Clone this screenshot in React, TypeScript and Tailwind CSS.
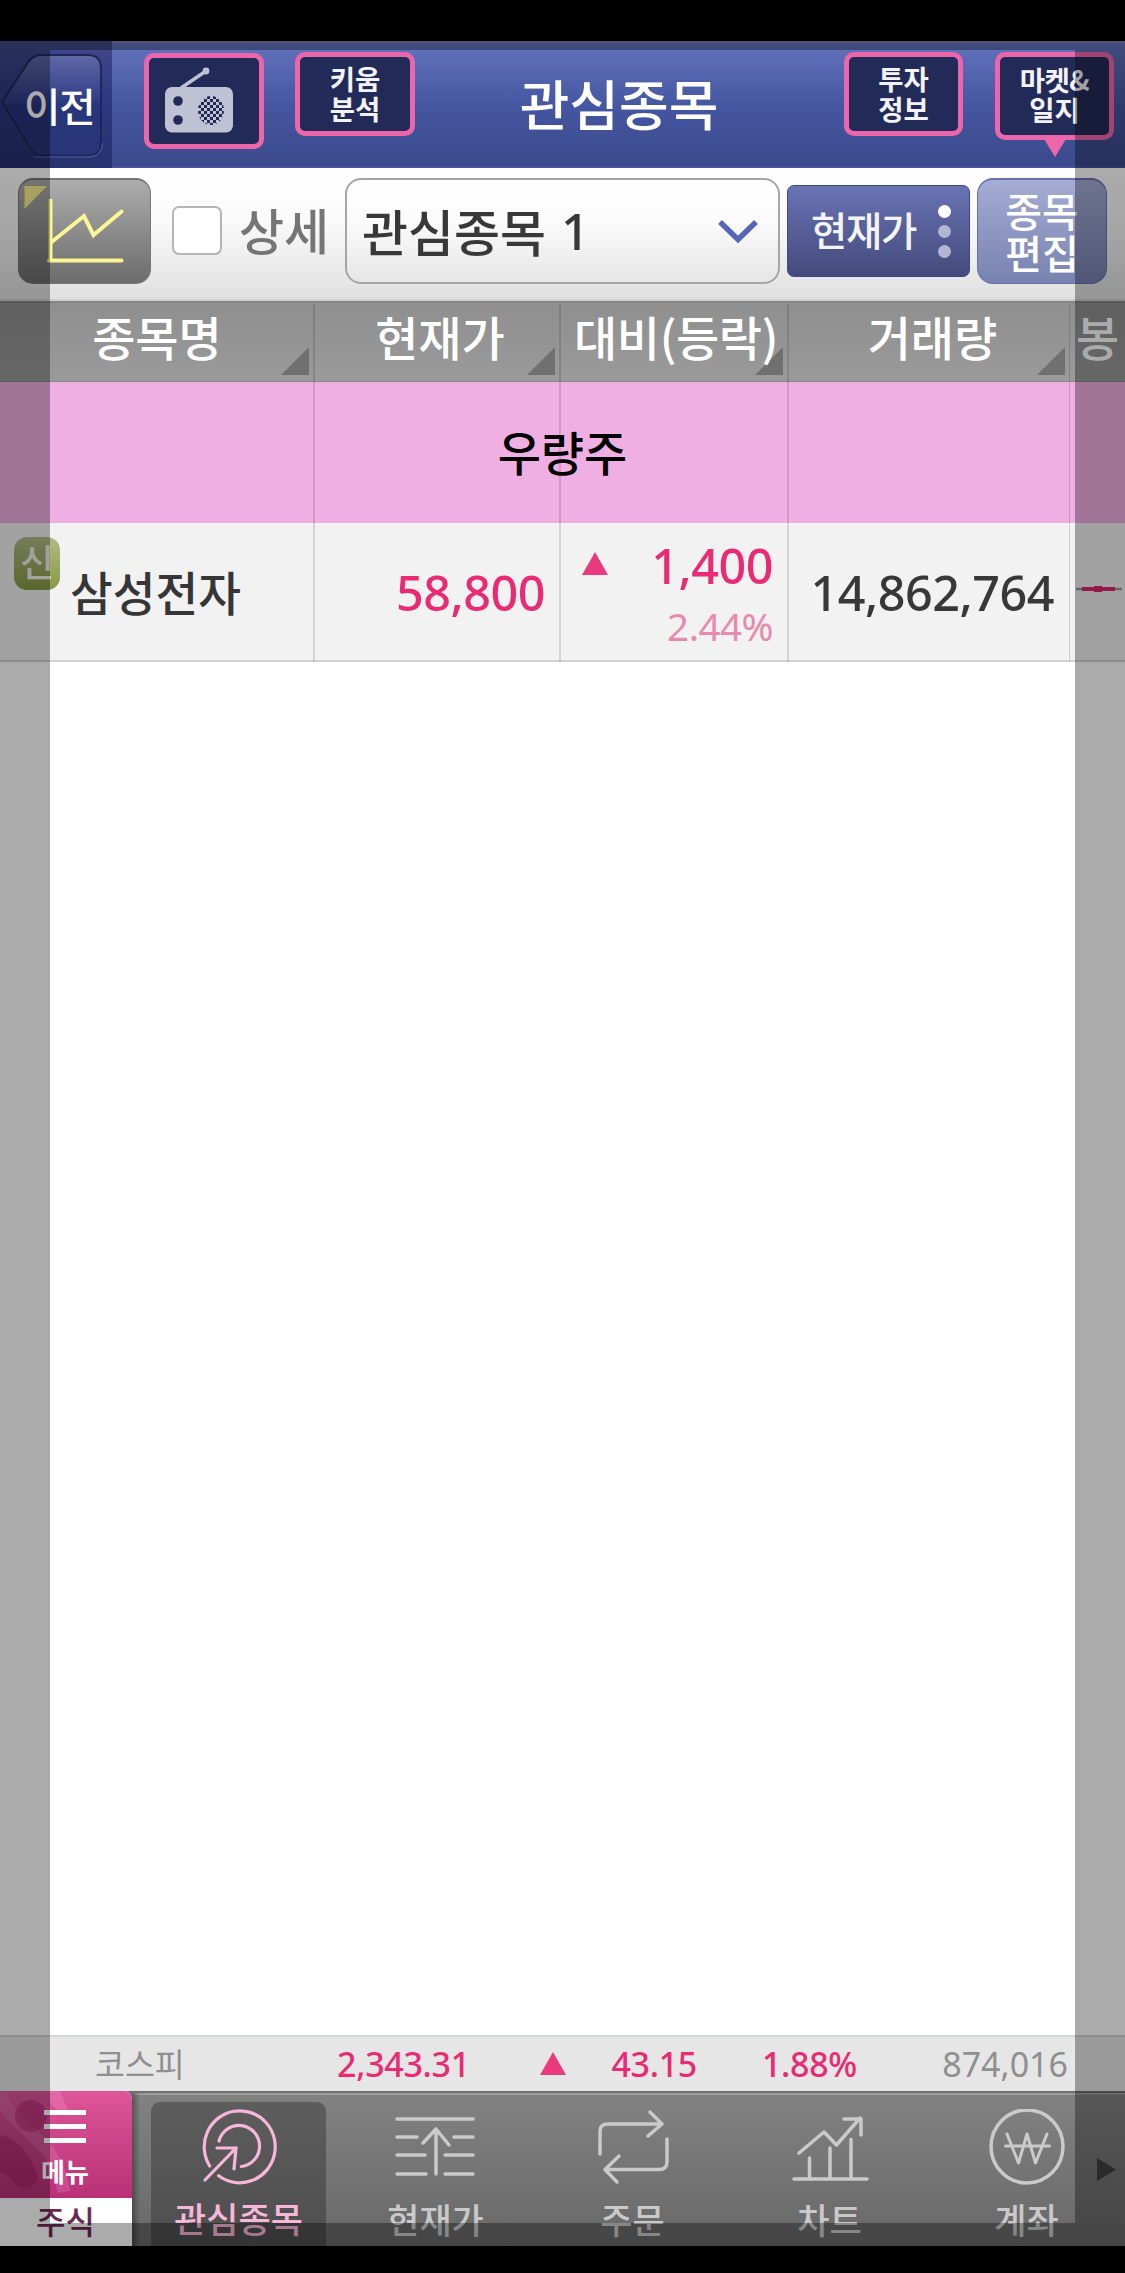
import type { ReactNode } from "react";

const columns = [
  { label: "종목명", cls: "w-[314px]" },
  { label: "현재가", cls: "w-[246px] pl-[6px]" },
  { label: "대비(등락)", cls: "w-[228px] pl-[4px] tracking-[-0.4px]" },
  { label: "거래량", cls: "w-[282px] pl-[7px]" },
];

function PinkButton({ children, className }: { children: ReactNode; className: string }) {
  return (
    <button
      className={
        "relative flex shrink-0 flex-col items-center rounded-[10px] border-[5px] border-[#ed66ac] bg-[#222b57] text-[27.5px] font-bold leading-[30px] text-[#f2f2f8] " +
        className
      }
    >
      {children}
    </button>
  );
}

function RadioIcon() {
  return (
    <svg width="110" height="86" viewBox="149 58 110 86" fill="none">
      <defs>
        <pattern id="grille" width="6" height="6" patternUnits="userSpaceOnUse">
          <rect width="6" height="6" fill="#222b57" />
          <rect width="3" height="3" fill="#bfc2d4" />
          <rect x="3" y="3" width="3" height="3" fill="#bfc2d4" />
        </pattern>
      </defs>
      <path d="M181 88 L206 71" stroke="#bfc2d4" strokeWidth="3.5" />
      <circle cx="206" cy="71" r="3.4" fill="#bfc2d4" />
      <rect x="165" y="87" width="68" height="45.500" rx="7" fill="#bfc2d4" />
      <circle cx="178" cy="101" r="4.800" fill="#222b57" />
      <circle cx="178" cy="120" r="4.800" fill="#222b57" />
      <ellipse cx="211" cy="110.500" rx="13" ry="14.500" fill="url(#grille)" />
    </svg>
  );
}

function Header() {
  return (
    <header className="flex h-[127px] shrink-0 items-start border-t-2 border-b-2 border-t-[#7a7ea8] border-b-[#4453a0] bg-linear-to-b from-[#6272bc] via-[#44559f] via-55% to-[#3a4a8b] text-white">
      <button className="relative -mt-[2px] h-[127px] w-[112px] shrink-0 bg-linear-to-b from-[#40498a] via-[#2b387e] via-50% to-[#27336f]">
        <svg className="absolute inset-0" width="112" height="127" viewBox="0 41 112 127" fill="none">
          <defs>
            <linearGradient id="back" x1="0" y1="55" x2="0" y2="156" gradientUnits="userSpaceOnUse">
              <stop offset="0" stopColor="#5f6aa6" />
              <stop offset="0.45" stopColor="#2f3d86" />
              <stop offset="0.5" stopColor="#27357c" />
              <stop offset="1" stopColor="#293678" />
            </linearGradient>
          </defs>
          <path
            d="M2 102 L29 61 Q34 55 41 55 H88 Q101 55 101 69 V142 Q101 155.500 88 155.500 H41 Q35 155.500 31 149 Z"
            fill="url(#back)"
            stroke="#1e2858"
            strokeWidth="2"
          />
          <path d="M34 157 H90 Q102 156 102.500 143" stroke="#56609a" strokeWidth="1" />
        </svg>
        <span className="absolute top-[44px] left-[24px] text-[39.500px] leading-[40px] font-medium tracking-[-1px] whitespace-nowrap">이전</span>
      </button>
      <PinkButton className="mt-[10px] ml-[32px] h-[96px] w-[120px]">
        <RadioIcon />
      </PinkButton>
      <PinkButton className="mt-[9px] ml-[31px] h-[84px] w-[120px] pt-[6px]">
        <span>키움</span>
        <span>분석</span>
      </PinkButton>
      <h1 className="mt-[33px] ml-[104px] w-[200px] text-center text-[54px] leading-[54px] font-medium whitespace-nowrap">관심종목</h1>
      <PinkButton className="mt-[9px] ml-[125px] h-[84px] w-[119px] pt-[6px]">
        <span>투자</span>
        <span>정보</span>
      </PinkButton>
      <PinkButton className="mt-[9px] ml-[32px] h-[88px] w-[119px] pt-[7px]">
        <span className="tracking-[-0.5px]">마켓&amp;</span>
        <span>일지</span>
        <svg className="absolute top-[82px] left-[44px]" width="22" height="18" viewBox="0 0 22 18">
          <path d="M0 0H22L11 18Z" fill="#ed66ac" />
        </svg>
      </PinkButton>
    </header>
  );
}

function Toolbar() {
  return (
    <section className="flex h-[133px] shrink-0 items-start border-b-2 border-[#cfcfcf] bg-linear-to-b from-white via-[#fafafa] via-40% to-[#e0e0e0] pt-[10px] pl-[18px]">
      <button className="h-[106px] w-[133px] shrink-0 overflow-hidden rounded-[15px] border border-t-2 border-[#777] bg-linear-to-b from-[#adadad] to-[#6c6c6c]">
        <svg width="131" height="103" viewBox="19 180 131 103" fill="none">
          <path d="M24.500 186H47L24.500 209Z" fill="#f8f08c" />
          <path d="M50.500 199V261.500" stroke="#fbf593" strokeWidth="4" />
          <path d="M49 260.500H121.500" stroke="#fbf593" strokeWidth="4" strokeLinecap="round" />
          <path d="M51 242.500L84 216L93.500 235L121.500 211.500" stroke="#fbf593" strokeWidth="4" strokeLinecap="round" />
        </svg>
      </button>
      <span className="mt-[28px] ml-[21px] h-[49px] w-[50px] shrink-0 rounded-[7px] border-2 border-[#b5b5b5] bg-white" />
      <span className="mt-[27px] ml-[17px] w-[90px] shrink-0 text-center text-[49px] leading-[48px] font-medium whitespace-nowrap text-[#757575]">상세</span>
      <button className="ml-[16px] flex h-[106px] w-[435px] shrink-0 items-start justify-between rounded-[16px] border-2 border-[#a6a6a6] bg-linear-to-b from-white via-[#fbfbfb] via-40% to-[#e6e6e6] pt-[25px] pr-[17px] pl-[15px]">
        <span className="flex text-[50px] leading-[50px] font-medium whitespace-nowrap text-[#383838]">
          관심종목<span className="mt-[1px] ml-[15px] font-['Noto_Sans',sans-serif]">1</span>
        </span>
        <svg className="mt-[12px]" width="46" height="30" viewBox="715 217 46 30" fill="none">
          <path d="M720 222L738 239.500L756 222" stroke="#5566b6" strokeWidth="5.500" />
        </svg>
      </button>
      <button className="mt-[7px] ml-[7px] flex h-[92px] w-[183px] shrink-0 items-start justify-between rounded-[7px] border border-[#3c478c] bg-linear-to-b from-[#6a74b4] to-[#444a7c] pr-[18px] pl-[23px]">
        <span className="mt-[23px] text-[39.500px] leading-[40px] font-medium tracking-[-1.300px] whitespace-nowrap text-[#f3f3fa]">현재가</span>
        <span className="mt-[19px] flex flex-col gap-[7px]">
          <i className="size-[13px] rounded-full bg-white" />
          <i className="size-[13px] rounded-full bg-[#b2b5d4]" />
          <i className="size-[13px] rounded-full bg-[#b2b5d4]" />
        </span>
      </button>
      <button className="ml-[7px] flex h-[106px] w-[130px] shrink-0 flex-col items-center rounded-[16px] border border-t-2 border-[#6572ae] bg-linear-to-b from-[#a5add4] to-[#7882b0] pt-[10px] text-[40px] leading-[41.500px] font-medium text-white">
        <span>종목</span>
        <span>편집</span>
      </button>
    </section>
  );
}

function Table() {
  return (
    <section className="relative flex shrink-0 flex-col">
      <div className="flex h-[81px] border-t-2 border-b border-t-[#858585] border-b-[#8a8a8a] bg-linear-to-b from-[#8f8f8f] to-[#9a9a9a] text-[47px] leading-[47px] font-medium whitespace-nowrap text-white">
        {columns.map((c) => (
          <div key={c.label} className={"relative shrink-0 pt-[9px] text-center " + c.cls}>
            <svg className="absolute right-[5px] bottom-[6px]" width="28" height="28" viewBox="0 0 28 28">
              <path d="M28 0V28H0Z" fill="#707070" />
            </svg>
            <span className="relative">{c.label}</span>
          </div>
        ))}
        <div className="w-[55px] shrink-0 pt-[9px] text-center">봉</div>
      </div>
      <div className="flex h-[141px] justify-center bg-[#f0afe2] pt-[45px] text-[47px] leading-[47px] font-medium text-black">우량주</div>
      <div className="flex h-[139px] items-start border-b-2 border-[#d2d2d2] bg-[#f2f2f2] font-['Noto_Sans',sans-serif] text-[48.500px] leading-[48px] font-medium tracking-[-0.500px] whitespace-nowrap">
        <div className="flex w-[314px] shrink-0 items-start pl-[14px] font-['Noto_Sans_CJK_KR',sans-serif] tracking-normal">
          <span className="mt-[14px] flex h-[53px] w-[46px] shrink-0 justify-center rounded-[13px] bg-linear-to-b from-[#b1ba86] to-[#879a42] pt-[4px] text-[37px] leading-[40px] text-[#f0f0ea]">
            신
          </span>
          <span className="mt-[44px] ml-[10px] text-[46.500px] text-[#363636]">삼성전자</span>
        </div>
        <div className="w-[246px] shrink-0 pt-[45px] pr-[15px] text-right text-[#ea2a72]">58,800</div>
        <div className="w-[228px] shrink-0 pr-[15px] pl-[22px] text-[#ea2a72]">
          <div className="flex items-start justify-between pt-[18px]">
            <svg className="mt-[11px]" width="26" height="23" viewBox="0 0 26 23">
              <path d="M13 0L26 23H0Z" fill="#e93a7d" />
            </svg>
            <span>1,400</span>
          </div>
          <div className="mt-[18px] text-right text-[38.500px] leading-[38px] font-normal text-[#e68bad]">2.44%</div>
        </div>
        <div className="w-[282px] shrink-0 pt-[45px] pr-[16px] text-right text-[#383838]">14,862,764</div>
        <svg className="mt-[58px] ml-[6px] shrink-0" width="46" height="16" viewBox="0 0 46 16">
          <path d="M0 8H46" stroke="#999" strokeWidth="2.500" />
          <path d="M6 8H39" stroke="#e0256c" strokeWidth="4" />
          <path d="M18 8H26" stroke="#e0256c" strokeWidth="6" />
        </svg>
      </div>
      {/* Column rules run through the group row as well */}
      <div className="pointer-events-none absolute inset-x-0 top-[3px] bottom-0 flex">
        <i className="w-[315px] border-r-2 border-black/12" />
        <i className="w-[246px] border-r-2 border-black/12" />
        <i className="w-[228px] border-r-2 border-black/12" />
        <i className="w-[281px] border-r border-black/14" />
      </div>
    </section>
  );
}

function IndexBar() {
  return (
    <section className="flex h-[56px] shrink-0 items-start border-t-2 border-[#d2d6d4] bg-[#e6e6e6] font-['Noto_Sans',sans-serif] text-[34px] leading-[34px] font-medium tracking-[-0.300px] whitespace-nowrap text-[#ea2a72]">
      <span className="mt-[9px] ml-[95px] w-[242px] font-['Noto_Sans_CJK_KR',sans-serif] text-[32.500px] font-normal tracking-normal text-[#8f8f8f]">코스피</span>
      <span className="mt-[10px] w-[203px]">2,343.31</span>
      <svg className="mt-[15px]" width="26" height="23" viewBox="0 0 26 23">
        <path d="M13 0L26 23H0Z" fill="#e93a7d" />
      </svg>
      <span className="mt-[10px] w-[131px] text-right">43.15</span>
      <span className="mt-[10px] w-[160px] text-right">1.88%</span>
      <span className="mt-[10px] w-[211px] text-right font-normal tracking-normal text-[#8f8f8f]">874,016</span>
    </section>
  );
}

function Tab({ label, children }: { label: string; children: ReactNode }) {
  return (
    <button className="flex w-[197px] shrink-0 flex-col items-center pt-[16px] text-[35px] leading-[36px] font-medium whitespace-nowrap text-[#c9c9c9]">
      <svg width="90" height="80" viewBox="-45 -40 90 80" fill="none" stroke="#cacaca" strokeWidth="3.500" strokeLinecap="round" strokeLinejoin="round">
        {children}
      </svg>
      <span className="mt-[12px]">{label}</span>
    </button>
  );
}

function BottomNav() {
  return (
    <nav className="relative flex h-[155px] shrink-0 items-stretch border-t-2 border-[#6e6e6e] bg-linear-to-b from-[#828282] to-[#686868] shadow-[inset_0_2px_0_#9a9a9a]">
      <div className="relative z-10 -mt-[2px] flex w-[132px] shrink-0 flex-col overflow-hidden rounded-tr-[8px] bg-white">
        <div className="relative flex h-[107px] flex-col overflow-hidden bg-linear-to-b from-[#de5599] to-[#b83077]">
          <svg className="absolute inset-0" width="132" height="107" viewBox="0 0 132 107" fill="none">
            <path d="M0 2C12 42 54 40 64 101" stroke="#e07ab2" strokeOpacity=".35" strokeWidth="13" />
            <ellipse cx="31" cy="25" rx="16" ry="16" fill="#a82068" fillOpacity=".45" />
            <path d="M0 44C20 46 36 74 38 88Q28 104 14 92Q5 80 0 82Z" fill="#9a185c" fillOpacity=".4" />
            <path d="M50 0H60L68 20Q55 22 50 10Z" fill="#e67bb4" fillOpacity=".5" />
          </svg>
          <div className="relative mt-[19px] ml-[44px] flex w-[42px] flex-col gap-[9px]">
            <i className="h-[5px] bg-white" />
            <i className="h-[5px] bg-white" />
            <i className="h-[5px] bg-white" />
          </div>
          <span className="relative mt-[15px] ml-[41px] text-[26px] leading-[26px] font-bold whitespace-nowrap text-white">메뉴</span>
        </div>
        <span className="mt-[6px] ml-[36px] text-[32px] leading-[32px] font-medium whitespace-nowrap text-[#6b2a54]">주식</span>
      </div>
      <div className="-ml-1 w-[12px] shrink-0 bg-linear-to-r from-black/50 to-transparent" />
      <button className="mt-[9px] mr-[11px] ml-[11px] flex w-[175px] shrink-0 flex-col items-center rounded-t-[9px] bg-linear-to-b from-[#5d5d5d] to-[#4e4e4e] pt-[4px] text-[35px] leading-[36px] font-medium whitespace-nowrap text-[#f7b7d9]">
        <svg width="80" height="80" viewBox="-40 -40 80 80" fill="none" stroke="#f7b7d9" strokeWidth="3.200" strokeLinecap="round">
          <path d="M-29.300 20A35.500 36 0 1 1 -20.300 29.800" />
          <path d="M-20 -5A20.600 20.600 0 1 1 2.300 20.500" />
          <path d="M-34 34L-3 2M-22 2H-3L-5 23" />
        </svg>
        <span className="mt-[14px]">관심종목</span>
      </button>
      <Tab label="현재가">
        <path d="M-39 -30H37M-39 -12H-19M18 -12H37M-39 6H-11M9 6H37M-39 25H-10M9 25H37M0 25V-20M-13 -6L0 -20L13 -4" />
      </Tab>
      <Tab label="주문">
        <path d="M-33 5V-18Q-33 -25 -25 -25H29M17 -37L29 -25L15 -13M34 -10V13Q34 20.500 26 20.500H-28M-14 7L-28 20.500L-16 33" />
      </Tab>
      <Tab label="차트">
        <path d="M-36 30H37M-20.500 30V9M0 30V-1M21 30V-9.500M-31 4L-6 -17L6.500 -4L30 -31M14 -30H31V-14" />
      </Tab>
      <Tab label="계좌">
        <ellipse cx="0" cy="-2.500" rx="36" ry="36.500" />
        <path d="M-20 -15L-8.500 14L0 -15L8.500 14L20 -15M-21.500 -3H22.500" strokeWidth="3" />
      </Tab>
      <svg className="absolute top-[65px] right-[9px]" width="19" height="23" viewBox="0 0 19 23">
        <path d="M0 0L19 11.500L0 23Z" fill="#404040" />
      </svg>
    </nav>
  );
}

export default function App() {
  return (
    <div className="h-[2273px] w-[1125px] overflow-hidden bg-black py-[41px] pb-[27px] font-['Noto_Sans_CJK_KR',sans-serif]">
      <main className="relative flex h-[2205px] flex-col bg-white">
        <Header />
        <Toolbar />
        <Table />
        <div className="grow" />
        <IndexBar />
        <BottomNav />
        {/* Dimmed frame around the visible area */}
        <div className="pointer-events-none absolute inset-0 z-20 border-x-[50px] border-t-[9px] border-b-[23px] border-black/33" />
      </main>
    </div>
  );
}
